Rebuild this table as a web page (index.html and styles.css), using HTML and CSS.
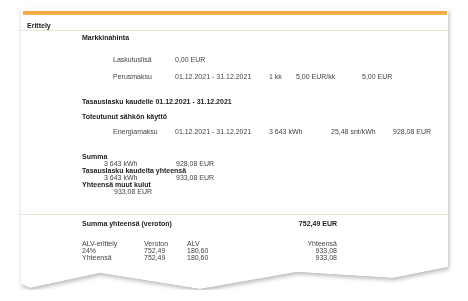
FILE: index.html
```html
<!DOCTYPE html>
<html lang="fi">
<head>
<meta charset="utf-8">
<link rel="stylesheet" href="styles.css">
</head>
<body>
<div class="wrap">
  <div class="sheet">
    <div class="bar"></div>
    <div class="head">Erittely</div>
    <div class="content">
      <div class="h sec1">Markkinahinta</div>
      <div class="row r-lisa">
        <span class="c-label">Laskutuslisä</span>
        <span class="c-date">0,00 EUR</span>
      </div>
      <div class="row r-perus">
        <span class="c-label">Perusmaksu</span>
        <span class="c-date">01.12.2021 - 31.12.2021</span>
        <span class="c-qty">1 kk</span>
        <span class="c-unit1">5,00 EUR/kk</span>
        <span>5,00 EUR</span>
      </div>
      <div class="h sec2">Tasauslasku kaudelle 01.12.2021 - 31.12.2021</div>
      <div class="h sec3">Toteutunut sähkön käyttö</div>
      <div class="row r-energ">
        <span class="c-label">Energiamaksu</span>
        <span class="c-date">01.12.2021 - 31.12.2021</span>
        <span class="c-qty2">3 643 kWh</span>
        <span class="c-unit2">25,48 snt/kWh</span>
        <span>928,08 EUR</span>
      </div>
      <div class="sums">
        <div class="h">Summa</div>
        <div class="srow"><span class="s-kwh">3 643 kWh</span><span>928,08 EUR</span></div>
        <div class="h">Tasauslasku kaudelta yhteensä</div>
        <div class="srow"><span class="s-kwh">3 643 kWh</span><span>933,08 EUR</span></div>
        <div class="h">Yhteensä muut kulut</div>
        <div class="srow"><span class="s-eur">933,08 EUR</span></div>
      </div>
    </div>
    <div class="total">
      <span class="h t-label">Summa yhteensä (veroton)</span>
      <span class="h t-val">752,49 EUR</span>
    </div>
    <div class="alv">
      <div class="arow"><span class="a1">ALV-erittely</span><span class="a2">Veroton</span><span class="a3">ALV</span><span class="a4">Yhteensä</span></div>
      <div class="arow"><span class="a1">24%</span><span class="a2">752,49</span><span class="a3">180,60</span><span class="a4">933,08</span></div>
      <div class="arow"><span class="a1">Yhteensä</span><span class="a2">752,49</span><span class="a3">180,60</span><span class="a4">933,08</span></div>
    </div>
  </div>
</div>
</body>
</html>
```

FILE: styles.css
```css
html, body {
  margin: 0;
  padding: 0;
  background: #ffffff;
}

body {
  font-family: "Liberation Sans", Arial, sans-serif;
  font-size: 7px;
  line-height: 7px;
  color: #444444;
}

.wrap {
  margin: 9px 0 0 21px;
  width: 427px;
  filter: drop-shadow(0 0 0.6px rgba(0, 0, 0, 0.35)) drop-shadow(1.5px 2px 2px rgba(0, 0, 0, 0.28));
}

.sheet {
  background: #ffffff;
  height: 281px;
  padding-top: 2px;
  box-sizing: border-box;
  clip-path: polygon(0 0, 100% 0, 100% 258px, 372px 269px, 276px 263px, 179px 280px, 79px 264px, 9px 279px, 0 275px);
}

.bar {
  height: 4px;
  margin: 0 1px 0 2px;
  background: linear-gradient(#f0a23a, #f5b356);
}

.head {
  height: 16px;
  box-sizing: border-box;
  padding: 7px 0 0 6px;
  font-weight: bold;
  color: #1c1c1c;
  border-bottom: 1px solid #ebe4d2;
}

.content {
  padding-left: 61px;
}

.h {
  font-weight: bold;
  color: #1c1c1c;
}

.sec1 { margin-top: 3px; }

.row {
  display: flex;
  white-space: nowrap;
}

.c-label { width: 62px; padding-left: 31px; }
.c-date { width: 94px; }
.c-qty { width: 27px; }
.c-qty2 { width: 62px; }
.c-unit1 { width: 66px; }
.c-unit2 { width: 62px; }

.r-lisa { margin-top: 15px; }
.r-perus { margin-top: 10px; }
.sec2 { margin-top: 18px; }
.sec3 { margin-top: 8px; }
.r-energ { margin-top: 8px; }

.sums { margin-top: 18px; }

.srow {
  display: flex;
  white-space: nowrap;
}

.s-kwh { width: 72px; padding-left: 22px; }
.s-eur { padding-left: 32px; }

.total {
  margin-top: 19px;
  border-top: 1px solid #ebe4d2;
  padding: 5px 111px 0 61px;
  display: flex;
  justify-content: space-between;
  white-space: nowrap;
}

.alv {
  padding: 13px 111px 0 61px;
}

.arow {
  display: flex;
  white-space: nowrap;
}

.a1 { width: 62px; }
.a2 { width: 43px; }
.a3 { width: 50px; }
.a4 { flex: 1; text-align: right; }
```
